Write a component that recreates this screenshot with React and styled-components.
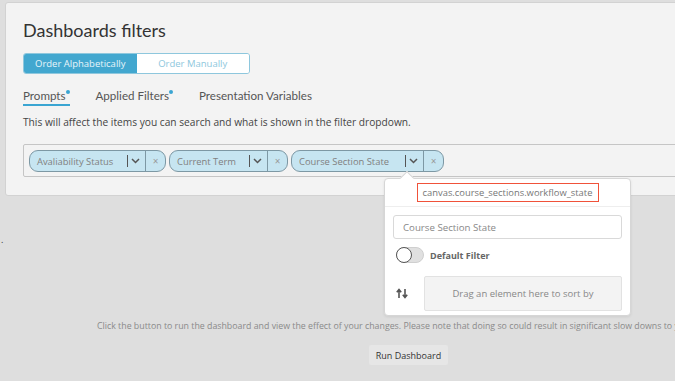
import styled, { createGlobalStyle } from "styled-components";

const GlobalStyle = createGlobalStyle`
  html, body {
    margin: 0;
    padding: 0;
    background: #dedede;
    overflow: hidden;
    font-family: "Open Sans", "Liberation Sans", sans-serif;
  }
`;

const prompts = [
  { label: "Avaliability Status", width: 137 },
  { label: "Current Term", width: 119 },
  { label: "Course Section State", width: 153 },
];

const ChevronIcon = () => (
  <svg width="9" height="6" viewBox="0 0 9 6">
    <path d="M1 1l3.5 3.5L8 1" fill="none" stroke="#555" strokeWidth="1.5" />
  </svg>
);

const SortIcon = () => (
  <svg width="12" height="11" viewBox="0 0 12 11">
    <path d="M3 10V2M0.8 4.2L3 1.5l2.2 2.7" fill="none" stroke="#555" strokeWidth="1.6" />
    <path d="M9 1v8M6.8 6.8L9 9.5l2.2-2.7" fill="none" stroke="#555" strokeWidth="1.6" />
  </svg>
);

const App = () => {
  return (
    <Page>
      <GlobalStyle />
      <Card>
        <Title>Dashboards filters</Title>
        <Segmented>
          <SegmentButton active>Order Alphabetically</SegmentButton>
          <SegmentButton>Order Manually</SegmentButton>
        </Segmented>
        <Tabs>
          <Tab active dot>
            Prompts
          </Tab>
          <Tab dot>Applied Filters</Tab>
          <Tab>Presentation Variables</Tab>
        </Tabs>
        <Description>
          This will affect the items you can search and what is shown in the filter dropdown.
        </Description>
        <FilterArea>
          <FilterBox>
            {prompts.map((p) => (
              <Chip key={p.label} style={{ width: p.width }}>
                <ChipLabel>{p.label}</ChipLabel>
                <ChipToggle>
                  <ChevronIcon />
                </ChipToggle>
                <ChipRemove>×</ChipRemove>
              </Chip>
            ))}
          </FilterBox>
          <Popover>
            <ColumnName>canvas.course_sections.workflow_state</ColumnName>
            <PopoverBody>
              <NameInput readOnly value="Course Section State" />
              <ToggleRow>
                <Switch />
                <ToggleLabel>Default Filter</ToggleLabel>
              </ToggleRow>
              <SortRow>
                <SortIcon />
                <DropZone>Drag an element here to sort by</DropZone>
              </SortRow>
            </PopoverBody>
          </Popover>
        </FilterArea>
      </Card>
      <Stray>.</Stray>
      <RunSection>
        <RunNote>
          Click the button to run the dashboard and view the effect of your changes. Please note
          that doing so could result in significant slow downs to your dashboard.
        </RunNote>
        <RunButton>Run Dashboard</RunButton>
      </RunSection>
    </Page>
  );
};

export default App;

const Page = styled.div`
  width: 675px;
  height: 381px;
  overflow: hidden;
  padding-top: 2px;
  box-sizing: border-box;
`;

const Card = styled.div`
  margin-left: 5px;
  width: 720px;
  height: 194px;
  box-sizing: border-box;
  background: #f3f3f3;
  border: 1px solid #d2d2d2;
  border-radius: 3px;
  padding: 15px 0 0 17px;
`;

const Title = styled.h1`
  margin: 0;
  font-family: "Lato", "Liberation Sans", sans-serif;
  font-weight: 400;
  font-size: 18px;
  line-height: 24px;
  color: #333;
`;

const Segmented = styled.div`
  display: flex;
  width: 227px;
  height: 21px;
  margin-top: 11px;
  border: 1px solid #8ec7dd;
  border-radius: 3px;
  overflow: hidden;
  box-sizing: border-box;
`;

const SegmentButton = styled.div`
  flex: 1;
  display: flex;
  align-items: center;
  justify-content: center;
  font-size: 9.5px;
  color: ${(p) => (p.active ? "#e8f5fa" : "#8ec7dd")};
  background: ${(p) => (p.active ? "#42a7cf" : "#ffffff")};
`;

const Tabs = styled.div`
  display: flex;
  gap: 26px;
  margin-top: 14px;
  height: 19px;
`;

const Tab = styled.div`
  position: relative;
  font-family: "Lato", "Liberation Sans", sans-serif;
  font-size: 11.6px;
  line-height: 16px;
  color: #555;
  padding-right: ${(p) => (p.dot ? "4px" : "0")};
  border-bottom: 2px solid ${(p) => (p.active ? "#3aa5d2" : "transparent")};
  height: 16px;

  &::after {
    content: "";
    display: ${(p) => (p.dot ? "block" : "none")};
    position: absolute;
    right: 0;
    top: 2px;
    width: 4px;
    height: 4px;
    border-radius: 50%;
    background: #3aa5d2;
  }
`;

const Description = styled.p`
  margin: 8px 0 0;
  font-size: 10.2px;
  line-height: 14px;
  color: #444;
`;

const FilterArea = styled.div`
  position: relative;
  margin-top: 15px;
`;

const FilterBox = styled.div`
  display: flex;
  align-items: center;
  gap: 3px;
  height: 33px;
  box-sizing: border-box;
  padding: 1px 5px 0;
  border: 1px solid #c5c5c5;
  border-radius: 2px;
  background: #f3f3f3;
`;

const Chip = styled.div`
  display: flex;
  align-items: stretch;
  height: 22px;
  box-sizing: border-box;
  border: 1px solid #7d98a4;
  border-radius: 9px;
  background: #c6e5f1;
  overflow: hidden;
`;

const ChipLabel = styled.div`
  flex: 1;
  display: flex;
  align-items: center;
  padding-left: 7px;
  font-size: 9.4px;
  color: #808080;
  white-space: nowrap;
`;

const ChipToggle = styled.div`
  display: flex;
  align-items: center;
  gap: 3px;
  padding: 0 5px 0 4px;
  border-right: 1px solid #7d98a4;

  &::before {
    content: "";
    width: 1px;
    height: 12px;
    background: #555;
  }
`;

const ChipRemove = styled.div`
  width: 19px;
  display: flex;
  align-items: center;
  justify-content: center;
  font-size: 10px;
  color: #999;
`;

const Popover = styled.div`
  position: absolute;
  left: 361px;
  top: 34px;
  width: 247px;
  height: 138px;
  box-sizing: border-box;
  background: #fff;
  border: 1px solid #d6d6d6;
  border-radius: 4px;
  box-shadow: 0 1px 3px rgba(0, 0, 0, 0.08);

  &::before {
    content: "";
    position: absolute;
    top: -6px;
    left: 17px;
    width: 9px;
    height: 9px;
    background: #fff;
    border-left: 1px solid #d6d6d6;
    border-top: 1px solid #d6d6d6;
    transform: rotate(45deg);
  }
`;

const ColumnName = styled.div`
  position: relative;
  margin: 4px auto 0;
  width: 182px;
  height: 19px;
  box-sizing: border-box;
  border: 1px solid #f0523a;
  display: flex;
  align-items: center;
  justify-content: center;
  font-size: 9.4px;
  color: #777;
  white-space: nowrap;
`;

const PopoverBody = styled.div`
  margin-top: 4px;
  border-top: 1px solid #eeeeee;
  padding: 8px 8px 0;
`;

const NameInput = styled.input`
  display: block;
  width: 100%;
  height: 24px;
  box-sizing: border-box;
  border: 1px solid #d9d9d9;
  border-radius: 3px;
  padding: 0 9px;
  font-family: "Open Sans", "Liberation Sans", sans-serif;
  font-size: 9.7px;
  color: #888;
  outline: none;
`;

const ToggleRow = styled.div`
  display: flex;
  align-items: center;
  gap: 6px;
  margin-top: 8px;
  padding-left: 3px;
`;

const Switch = styled.div`
  position: relative;
  width: 28px;
  height: 16px;
  box-sizing: border-box;
  border-radius: 8px;
  background: #e0e0e0;
  border: 1px solid #cfcfcf;

  &::after {
    content: "";
    position: absolute;
    left: -1px;
    top: -1px;
    width: 16px;
    height: 16px;
    box-sizing: border-box;
    border-radius: 50%;
    background: #fff;
    border: 1px solid #555;
  }
`;

const ToggleLabel = styled.span`
  font-size: 9px;
  font-weight: 700;
  color: #666;
`;

const SortRow = styled.div`
  display: flex;
  align-items: center;
  gap: 16px;
  margin-top: 13px;
  padding-left: 3px;
`;

const DropZone = styled.div`
  flex: 1;
  height: 33px;
  display: flex;
  align-items: center;
  justify-content: center;
  background: #f3f3f3;
  border: 1px solid #e2e2e2;
  border-radius: 2px;
  font-size: 9.5px;
  color: #888;
`;

const Stray = styled.div`
  margin-top: 39px;
  padding-left: 1px;
  height: 10px;
  font-size: 9px;
  line-height: 10px;
  color: #333;
`;

const RunSection = styled.div`
  margin-top: 75px;
  padding-left: 97px;
`;

const RunNote = styled.p`
  margin: 0;
  width: 900px;
  white-space: nowrap;
  font-size: 8.8px;
  line-height: 12px;
  color: #8a8a8a;
`;

const RunButton = styled.button`
  display: block;
  margin: 13px 0 0 272px;
  width: 79px;
  height: 20px;
  border: none;
  border-radius: 2px;
  background: #e6e6e6;
  font-family: "Open Sans", "Liberation Sans", sans-serif;
  font-size: 9px;
  color: #333;
  padding: 0;
`;
